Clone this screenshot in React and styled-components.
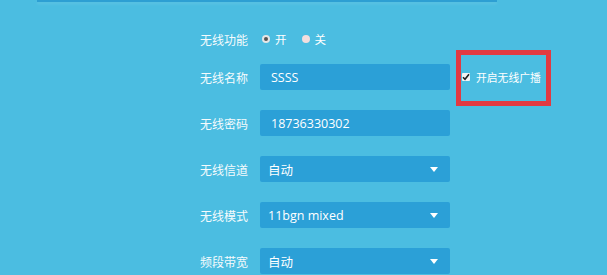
import React from "react";
import styled, { createGlobalStyle } from "styled-components";

const Global = createGlobalStyle`
  html, body { margin: 0; padding: 0; background: #4bbde1; }
  body { width: 607px; height: 275px; overflow: hidden; font-family: "Open Sans", "Noto Sans CJK SC", sans-serif; }
`;

const Page = styled.div`
  width: 607px;
  height: 275px;
  background: #4bbde1;
  overflow: hidden;
`;

const TopRule = styled.div`
  margin: 0 110px 0 37px;
  height: 2px;
  background: #2d9fd3;
  box-shadow: 0 2px 3px rgba(255, 255, 255, 0.12);
`;

const Form = styled.div`
  display: flex;
  flex-direction: column;
  padding: 24px 0 0 200px;
`;

const Row = styled.div`
  position: relative;
  display: flex;
  align-items: center;
  height: 26px;
  margin-bottom: ${(p) => p.$gap ?? 20}px;
`;

const Label = styled.div`
  width: 60px;
  color: #ffffff;
  font-family: "Noto Sans CJK SC", sans-serif;
  font-size: 12px;
  opacity: 0.95;
`;

const RadioGroup = styled.div`
  display: flex;
  align-items: center;
  gap: 15px;
  margin-left: 2px;
`;

const RadioItem = styled.div`
  display: flex;
  align-items: center;
  gap: 5px;
  color: #fff;
  font-family: "Noto Sans CJK SC", sans-serif;
  font-size: 11.5px;
`;

const RadioDot = styled.span`
  width: 8px;
  height: 8px;
  border-radius: 50%;
  background: ${(p) => (p.$on ? "#e6e6e6" : "#f3dede")};
  display: flex;
  align-items: center;
  justify-content: center;
  &::after {
    content: "";
    width: 4px;
    height: 4px;
    border-radius: 50%;
    background: ${(p) => (p.$on ? "#555" : "transparent")};
  }
`;

const Field = styled.div`
  box-sizing: border-box;
  width: 190px;
  height: 26px;
  background: #2ba0d7;
  border-radius: 2px;
  display: flex;
  align-items: center;
  justify-content: space-between;
  padding: 0 12px 0 ${(p) => p.$pad ?? 11}px;
  color: #fff;
  font-size: 12.5px;
  font-family: "Open Sans", "Noto Sans CJK SC", sans-serif;
`;

const Arrow = styled.span`
  width: 0;
  height: 0;
  border-left: 4px solid transparent;
  border-right: 4px solid transparent;
  border-top: 5px solid #fff;
  margin-top: 1px;
`;

const CheckWrap = styled.div`
  display: flex;
  align-items: center;
  gap: 6px;
  margin-left: 12px;
  color: #fff;
  font-family: "Noto Sans CJK SC", sans-serif;
  font-size: 10.8px;
`;

const CheckBox = styled.span`
  width: 8px;
  height: 8px;
  background: #f4f4f4;
  border-radius: 1px;
  display: flex;
  align-items: center;
  justify-content: center;
`;

const Highlight = styled.div`
  position: absolute;
  left: 256px;
  top: -14px;
  width: 95px;
  height: 56px;
  box-sizing: border-box;
  border: 5px solid #e13a42;
  pointer-events: none;
`;

export default function App() {
  return (
    <Page>
      <Global />
      <TopRule />
      <Form>
        <Row $gap={12}>
          <Label>无线功能</Label>
          <RadioGroup>
            <RadioItem>
              <RadioDot $on />开
            </RadioItem>
            <RadioItem>
              <RadioDot />关
            </RadioItem>
          </RadioGroup>
        </Row>
        <Row>
          <Label>无线名称</Label>
          <Field>SSSS</Field>
          <CheckWrap>
            <CheckBox>
              <svg width="8" height="8" viewBox="0 0 8 8">
                <path d="M1 4.2 L3 6.3 L7 1.2" fill="none" stroke="#222" strokeWidth="1.6" />
              </svg>
            </CheckBox>
            开启无线广播
          </CheckWrap>
          <Highlight />
        </Row>
        <Row>
          <Label>无线密码</Label>
          <Field>18736330302</Field>
        </Row>
        <Row>
          <Label>无线信道</Label>
          <Field $pad={8}>
            <span>自动</span>
            <Arrow />
          </Field>
        </Row>
        <Row>
          <Label>无线模式</Label>
          <Field $pad={8}>
            <span>11bgn mixed</span>
            <Arrow />
          </Field>
        </Row>
        <Row>
          <Label>频段带宽</Label>
          <Field $pad={8}>
            <span>自动</span>
            <Arrow />
          </Field>
        </Row>
      </Form>
    </Page>
  );
}
